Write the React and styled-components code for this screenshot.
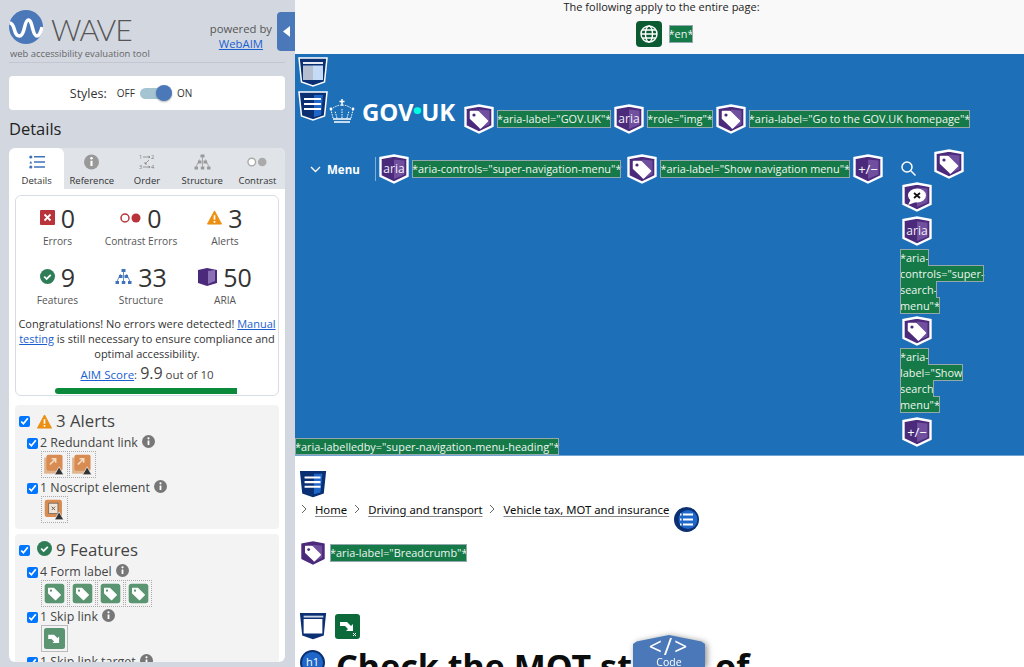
import React from 'react';
import styled, { createGlobalStyle } from 'styled-components';

const Global = createGlobalStyle`
  html, body { margin: 0; padding: 0; background: #fff; }
  body { font-family: "Open Sans", "Liberation Sans", sans-serif; overflow: hidden; }
  a { color: #1a5fd0; }
`;

const Page = styled.div`
  display: flex;
  width: 1024px;
  height: 667px;
  overflow: hidden;
  position: relative;
`;

/* ---------- sidebar ---------- */
const Sidebar = styled.aside`
  width: 295px;
  flex: none;
  height: 667px;
  background: #d3d8e0;
  padding: 0 10px 0 9px;
  box-sizing: border-box;
  position: relative;
  color: #333;
`;
const Brand = styled.div`
  display: flex;
  justify-content: space-between;
  height: 63px;
  border-bottom: 1px solid #c2c7cf;
  box-sizing: border-box;
`;
const LogoCol = styled.div`
  padding-top: 10px;
`;
const LogoRow = styled.div`
  display: flex;
  align-items: center;
  gap: 8px;
  height: 34px;
`;
const WaveWord = styled.span`
  font-family: "Lato", sans-serif;
  font-weight: 300;
  font-size: 30px;
  letter-spacing: -1px;
  color: #555;
  line-height: 34px;
  margin-top: 4px;
`;
const Tagline = styled.div`
  font-size: 9.4px;
  line-height: 14px;
  margin: 3px 0 0 1px;
  color: #666;
`;
const Powered = styled.div`
  font-size: 11.3px;
  line-height: 15px;
  text-align: center;
  padding: 21px 13px 0 0;
  color: #555;
`;
const Collapse = styled.button`
  position: absolute;
  left: 277px;
  top: 12px;
  width: 18px;
  height: 39px;
  padding: 0;
  border: 0;
  border-radius: 4px 0 0 4px;
  background: #4a78b8;
  display: flex;
  align-items: center;
  justify-content: center;
`;
const StylesBox = styled.div`
  margin-top: 13px;
  height: 34px;
  background: #fff;
  border-radius: 4px;
  display: flex;
  align-items: center;
  justify-content: center;
  font-size: 12px;
  padding-right: 32px;
`;
const StylesLabel = styled.span`
  margin-right: 10px;
  font-size: 12.5px;
`;
const Small = styled.span`
  font-size: 10px;
`;
const Switch = styled.span`
  position: relative;
  display: block;
  width: 32px;
  height: 11px;
  margin: 0 5px;
  border-radius: 6px;
  background: #a3c4d0;
  &::after {
    content: '';
    position: absolute;
    right: 0;
    top: -2.5px;
    width: 16px;
    height: 16px;
    border-radius: 50%;
    background: #4a78b8;
    box-shadow: 0 1px 2px rgba(0, 0, 0, .3);
  }
`;
const DetailsTitle = styled.h2`
  margin: 5px 0 0;
  padding-bottom: 5px;
  font-size: 16.5px;
  line-height: 28px;
  font-weight: 400;
  color: #222;
`;
const Panel = styled.div`
  height: 514px;
  background: #fff;
  border-radius: 6px;
  overflow: hidden;
`;
const Tabs = styled.div`
  display: flex;
  height: 41px;
  background: #e0e4e8;
`;
const Tab = styled.div`
  flex: 1;
  display: flex;
  flex-direction: column;
  align-items: center;
  justify-content: flex-start;
  padding-top: 5px;
  box-sizing: border-box;
  font-size: 9.5px;
  gap: 3px;
  color: #333;
  background: ${p => (p.$active ? '#fff' : 'transparent')};
  border-radius: ${p => (p.$active ? '6px 6px 0 0' : '0')};
  svg { height: 18px; }
`;
const PanelBody = styled.div`
  padding: 6px 6px 0;
`;
const Summary = styled.div`
  height: 201px;
  border: 1px solid #d8dde3;
  border-radius: 6px;
  box-sizing: border-box;
  padding-top: 5px;
  text-align: center;
`;
const StatGrid = styled.div`
  display: grid;
  grid-template-columns: 83px 84px 84px;
  justify-content: start;
  row-gap: 8px;
`;
const Stat = styled.div`
  display: flex;
  flex-direction: column;
  align-items: center;
  height: 51px;
`;
const StatTop = styled.div`
  display: flex;
  align-items: center;
  gap: 6px;
  height: 33px;
  font-size: 25px;
  color: #333;
`;
const StatLabel = styled.div`
  font-size: 10.2px;
  line-height: 14px;
  color: #555;
  white-space: nowrap;
`;
const Congrats = styled.p`
  margin: 5px 2px 0;
  font-size: 11px;
  line-height: 15px;
  color: #333;
`;
const Score = styled.div`
  margin-top: 1px;
  font-size: 11.5px;
  line-height: 22px;
  color: #444;
  b {
    font-weight: 400;
    font-size: 16px;
  }
`;
const ScoreBar = styled.div`
  width: 182px;
  height: 6px;
  margin: 2px 0 0 39px;
  border-radius: 3px 0 0 3px;
  background: #0a8a3a;
`;
const Group = styled.section`
  margin-top: ${p => p.$gap || 5}px;
  background: #f3f3f3;
  border-radius: 4px;
  padding: 4px 0 4px 4px;
`;
const GroupTitle = styled.div`
  display: flex;
  align-items: center;
  font-size: 16.8px;
  line-height: 24px;
  color: #444;
  gap: 4px;
  svg { margin-top: ${p => p.$lift || 0}px; }
`;
const Check = styled.input.attrs({ type: 'checkbox', defaultChecked: true })`
  width: 11px;
  height: 11px;
  margin: 0 ${p => p.$mr ?? 1}px 0 0;
  flex: none;
`;
const ItemRow = styled.div`
  display: flex;
  align-items: center;
  margin: 2px 0 0 8px;
  font-size: 12.4px;
  line-height: 16px;
  color: #444;
  gap: 1px;
  svg { margin-left: 3px; margin-top: -3px; }
`;
const Cells = styled.div`
  display: flex;
  margin: 0 0 2px 22px;
  min-height: 27px;
`;
const Cell = styled.div`
  width: 27px;
  height: 27px;
  box-sizing: border-box;
  display: flex;
  align-items: center;
  justify-content: center;
  border: 1px ${p => (p.$solid ? 'solid #bbb' : 'dotted #aaa')};
  margin-right: 1px;
`;

/* ---------- page ---------- */
const Main = styled.main`
  flex: 1;
  height: 667px;
  overflow: hidden;
  background: #fff;
  position: relative;
  font-size: 11px;
`;
const TopBand = styled.div`
  height: 54px;
  background: #f9f9f9;
  text-align: center;
  color: #222;
  line-height: 13px;
  padding-left: 4px;
  box-sizing: border-box;
`;
const BandIcons = styled.div`
  display: flex;
  justify-content: center;
  align-items: center;
  gap: 7px;
  margin-top: 8px;
  padding-left: 6px;
`;
const Attr = styled.span`
  background: #157a48;
  color: #eef6f0;
  outline: 1px solid #93a8ad;
  outline-offset: -1px;
  padding: 1px 0;
  font-size: 10.9px;
  line-height: 16px;
  white-space: nowrap;
  -webkit-box-decoration-break: clone;
  box-decoration-break: clone;
`;
const Masthead = styled.header`
  height: 402px;
  background: #1d70b8;
  border-bottom: 1px solid #6fa4d4;
  box-sizing: border-box;
  display: flex;
  flex-direction: column;
  padding-top: 2px;
`;
const MarkRow = styled.div`
  display: flex;
  height: 34px;
  padding-left: 2px;
`;
const LogoLine = styled.div`
  display: flex;
  align-items: center;
  height: 32px;
  padding-left: 2px;
  margin-bottom: 27px;
`;
const CrownSlot = styled.div`
  display: flex;
  margin: 9px 0 0 0;
`;
const GovWord = styled.span`
  font-family: "Open Sans", sans-serif;
  font-weight: 700;
  font-size: 24px;
  line-height: 32px;
  color: #fff;
  margin: 12px 9px 0 7px;
  letter-spacing: -.2px;
  white-space: nowrap;
  i {
    font-style: normal;
    font-size: 42px;
    line-height: 0;
    vertical-align: -4px;
    margin: 0 -2px;
    color: #00ffe0;
  }
`;
const TagPair = styled.div`
  display: flex;
  align-items: center;
  gap: 3px;
  margin-right: ${p => p.$after ?? 3}px;
  margin-top: ${p => p.$drop || 0}px;
`;
const NavLine = styled.div`
  display: flex;
  flex: 1;
  min-height: 0;
`;
const NavLeft = styled.div`
  width: 605px;
  flex: none;
  display: flex;
  align-items: center;
  align-self: flex-start;
  height: 30px;
  margin-top: 5px;
`;
const MenuBtn = styled.div`
  display: flex;
  align-items: center;
  gap: 6px;
  width: 81px;
  padding-left: 15px;
  box-sizing: border-box;
  color: #fff;
  font-weight: 700;
  font-size: 11.5px;
  height: 24px;
  border-right: 1px solid #7fb0dc;
  margin-right: 3px;
  flex: none;
`;
const SearchCol = styled.div`
  width: 85px;
  flex: none;
  line-height: 16px;
`;
const SearchTop = styled.div`
  display: flex;
  height: 30px;
  align-items: flex-end;
  gap: 16px;
  svg:first-child { margin-bottom: 1px; }
`;
const SearchMark = styled.div`
  display: flex;
  padding-left: 2px;
  margin: ${p => p.$my || '3px 0 0'};
`;
const BottomAttr = styled.div`
  line-height: 17px;
  height: 17px;
`;
const CrumbMark = styled.div`
  display: flex;
  padding: 13px 0 0 3px;
  height: 31px;
`;
const Crumbs = styled.nav`
  display: flex;
  align-items: center;
  height: 26px;
  padding-left: 6px;
  font-family: "Noto Sans", sans-serif;
  font-size: 11.3px;
  color: #0b0c0c;
  margin-top: -4px;
`;
const Crumb = styled.a`
  color: #0b0c0c;
  text-decoration: underline;
  text-decoration-color: #888;
  text-underline-offset: 2px;
  margin: 0 7px 0 8px;
`;
const CrumbEnd = styled.div`
  display: flex;
  margin: 20px 0 0 -2px;
`;
const LabelRow = styled.div`
  display: flex;
  align-items: center;
  gap: 4px;
  padding-left: 5px;
  height: 26px;
  margin-top: 18px;
`;
const MainMarks = styled.div`
  display: flex;
  gap: 7px;
  align-items: center;
  padding-left: 3px;
  margin-top: 45px;
  height: 30px;
`;
const H1Row = styled.div`
  display: flex;
  align-items: flex-start;
  margin-top: 4px;
  padding-left: 5px;
`;
const H1Badge = styled.span`
  flex: none;
  width: 25px;
  height: 25px;
  margin-top: 5px;
  border-radius: 50%;
  background: #1e66c8;
  border: 2px solid #0a2f73;
  box-sizing: border-box;
  color: #fff;
  font-size: 11px;
  line-height: 20px;
  text-align: center;
`;
const H1 = styled.h1`
  margin: -1px 0 0 11px;
  font-family: "Noto Sans", sans-serif;
  font-weight: 700;
  font-size: 34px;
  line-height: 44px;
  color: #0b0c0c;
  white-space: nowrap;
`;
const CodeShadow = styled.div`
  position: absolute;
  left: 338px;
  top: 635px;
  width: 72px;
  height: 32px;
  filter: drop-shadow(2px 1px 3px rgba(0, 0, 0, .45));
`;
const CodeTab = styled.div`
  height: 32px;
  background: #4a78b8;
  clip-path: polygon(0 28%, 5% 20%, 50% 0, 95% 20%, 100% 28%, 100% 100%, 0 100%);
  color: #fff;
  text-align: center;
  font-size: 10.5px;
  line-height: 11px;
  div { font-size: 23px; line-height: 21px; letter-spacing: 2px; padding-top: 1px; }
`;

/* ---------- drawn icons ---------- */
const TagGlyph = ({ fill = '#fff', hole = '#4b2a7b' }) => (
  <>
    <path d="M6.500 7.500h7.500l9.500 9.500-7 7L6.500 14.500z" fill={fill} stroke={fill} strokeWidth="1.500" strokeLinejoin="round" />
    <circle cx="10" cy="11" r="1.600" fill={hole} />
  </>
);

const Shield = ({ kind, size = 30, bare }) => (
  <svg width={size} height={size} viewBox="0 0 30 30" style={{ flex: 'none' }}>
    <path d="M1.500 4 15 1.500 28.500 4v18L15 28.500 1.500 22z" fill="#4b2a7b" stroke={bare ? 'none' : '#fff'} strokeWidth="2.400" />
    <path d="M15 5.500l10.500 1v14L15 25z" fill="#6f4f9e" />
    {kind === 'tag' && <TagGlyph />}
    {kind === 'aria' && (
      <text x="15" y="19" textAnchor="middle" fontSize="12" fill="#f2eef8" fontFamily="Open Sans">aria</text>
    )}
    {kind === 'plus' && (
      <text x="15" y="19.500" textAnchor="middle" fontSize="13" fill="#fff" fontFamily="Open Sans">+/−</text>
    )}
    {kind === 'x' && (
      <>
        <path d="M9 17 6 23l8-3z" fill="#fff" />
        <ellipse cx="15" cy="13.500" rx="9" ry="7" fill="#fff" />
        <path d="M12 11l6 5M18 11l-6 5" stroke="#111" strokeWidth="1.800" />
      </>
    )}
  </svg>
);

const Mark = ({ kind, border = true, size = 32 }) => (
  <svg width={size} height={size} viewBox="0 0 32 32" style={{ flex: 'none' }}>
    <path d="M2 2h28l-2.500 24L16 30 4.500 26z" fill="#0a2f73" stroke={border ? '#fff' : 'none'} strokeWidth="1.500" />
    {kind === 'banner' && (
      <>
        <path d="M6 6h20v2H6z" fill="#e6eaf0" />
        <path d="M6 9.500h10V24H6z" fill="#b6bfcf" />
        <path d="M16 9.500h10V24H16z" fill="#c5dbf5" />
      </>
    )}
    {kind === 'nav' && (
      <>
        <path d="M17 5h9l-2 20-7 2z" fill="#1e66c8" />
        <path d="M7 9h17M7 14h17M7 19h17" stroke="#fff" strokeWidth="2.200" />
      </>
    )}
    {kind === 'main' && (
      <>
        <path d="M6 5h21v2H6z" fill="#c9d4e6" />
        <path d="M6 8.500h20V24H6z" fill="#fff" />
      </>
    )}
  </svg>
);

const ListCircle = () => (
  <svg width="25" height="25" viewBox="0 0 25 25" style={{ flex: 'none' }}>
    <circle cx="12.500" cy="12.500" r="12.500" fill="#0a2f73" />
    <circle cx="14" cy="12.500" r="9.500" fill="#1e66c8" />
    <path d="M9 7.500h10M9 12.500h10M9 17.500h10" stroke="#fff" strokeWidth="1.800" />
    <path d="M6 7.500h1.500M6 12.500h1.500M6 17.500h1.500" stroke="#fff" strokeWidth="1.800" />
  </svg>
);

const Globe = () => (
  <svg width="26" height="26" viewBox="0 0 26 26">
    <rect width="26" height="26" rx="4" fill="#0c5a32" />
    <g fill="none" stroke="#fff" strokeWidth="1.400">
      <circle cx="13" cy="13" r="8" />
      <ellipse cx="13" cy="13" rx="3.500" ry="8" />
      <path d="M5 13h16M6.200 9h13.600M6.200 17h13.600" />
    </g>
  </svg>
);

const SkipSquare = () => (
  <svg width="25" height="25" viewBox="0 0 25 25" style={{ flex: 'none' }}>
    <rect width="25" height="25" rx="3" fill="#0c6a3a" />
    <path d="M5 8h7l4 4 2-2v7h-7l2-2-3-3H5z" fill="#fff" />
    <path d="M18 19l3 3M21 19l-3 3" stroke="#fff" />
  </svg>
);

const Crown = () => (
  <svg width="26" height="26" viewBox="0 0 26 26" style={{ flex: 'none' }}>
    <g fill="none" stroke="#fff">
      <path d="M13 1v7M10.500 3.500h5" strokeWidth="1.500" />
      <path d="M4 20 2 12M22 20l2-8M8 20 6 13M18 20l2-7M13 20v-9" strokeWidth="1" strokeDasharray="1.500 1" />
      <path d="M4 10q9-6 18 0" strokeWidth="1" strokeDasharray="1.500 1" />
      <path d="M4 21h18M5 24h16" strokeWidth="1.500" />
    </g>
    <circle cx="2" cy="11" r="1.400" fill="#fff" />
    <circle cx="24" cy="11" r="1.400" fill="#fff" />
  </svg>
);

const Search = () => (
  <svg width="18" height="18" viewBox="0 0 18 18" style={{ flex: 'none' }} fill="none" stroke="#fff" strokeWidth="1.500">
    <circle cx="7" cy="7" r="5" />
    <path d="M10.800 10.800 15.500 15.500" />
  </svg>
);

const WaveLogo = () => (
  <svg width="34" height="34" viewBox="0 0 34 34" style={{ flex: 'none' }}>
    <circle cx="17" cy="17" r="17" fill="#4a78b8" />
    <path d="M0.500 13c3 0 4 3 5 7s2.500 6 5 6 4-4 5-8.500 2-7.500 4-7.500 3 4 4 8 2.500 8 4.500 8 4-4 5-9" fill="none" stroke="#fff" strokeWidth="3.500" />
  </svg>
);

const ErrIcon = () => (
  <svg width="15" height="15" viewBox="0 0 15 15">
    <rect width="15" height="15" rx="1" fill="#b8343a" />
    <path d="M4.500 4.500l6 6M10.500 4.500l-6 6" stroke="#fff" strokeWidth="1.800" />
  </svg>
);
const ContrastIcon = ({ a = '#b8343a', b = '#b8343a', w = 21, h = 10 }) => (
  <svg width={w} height={h} viewBox="0 0 21 10">
    <circle cx="5" cy="5" r="4" fill="#fff" stroke={a} strokeWidth="1.500" />
    <circle cx="16" cy="5" r="4.500" fill={b} />
  </svg>
);
const AlertIcon = ({ size = 15 }) => (
  <svg width={size} height={size} viewBox="0 0 16 16" style={{ flex: 'none' }}>
    <path d="M8 1 15.500 15H.5z" fill="#ec8f12" stroke="#ec8f12" strokeLinejoin="round" />
    <path d="M8 5.500v5M8 11.800v1.700" stroke="#fff" strokeWidth="1.800" />
  </svg>
);
const OkIcon = ({ size = 15 }) => (
  <svg width={size} height={size} viewBox="0 0 15 15" style={{ flex: 'none' }}>
    <circle cx="7.500" cy="7.500" r="7.500" fill="#2f7d57" />
    <path d="M4.200 7.500 6.600 10l4.200-4.200" fill="none" stroke="#fff" strokeWidth="1.800" />
  </svg>
);
const TreeIcon = ({ color = '#3f72b8', size = 17 }) => (
  <svg width={size} height={size} viewBox="0 0 17 17">
    <g fill={color}>
      <rect x="6.500" y="1" width="4" height="3" />
      <rect x="4" y="7" width="3.500" height="3" />
      <rect x="9.500" y="7" width="3.500" height="3" />
      <rect x="0.500" y="13" width="3.500" height="3" />
      <rect x="6.800" y="13" width="3.500" height="3" />
      <rect x="13" y="13" width="3.500" height="3" />
    </g>
    <path d="M8.500 4v9M5.500 6 2.200 13M11.500 6l3.300 7" stroke={color} fill="none" strokeWidth=".8" />
  </svg>
);
const AriaIcon = () => (
  <svg width="19" height="18" viewBox="0 0 19 18">
    <path d="M0 2 9 0l10 2v13l-10 3-9-3z" fill="#4b2a7b" />
    <path d="M10 3l7-1v11l-7 3z" fill="#8a70b4" />
  </svg>
);
const Info = ({ size = 13, color = '#777' }) => (
  <svg width={size} height={size} viewBox="0 0 13 13" style={{ flex: 'none' }}>
    <circle cx="6.500" cy="6.500" r="6.500" fill={color} />
    <path d="M6.500 5.500v4.500" stroke="#fff" strokeWidth="1.800" />
    <circle cx="6.500" cy="3.300" r="1.100" fill="#fff" />
  </svg>
);
const ListTab = () => (
  <svg width="16" height="14" viewBox="0 0 16 14">
    <g fill="#3f72b8">
      <circle cx="1.800" cy="2" r="1.600" />
      <path d="M.3 8.500 1.800 6l1.500 2.500z" />
      <circle cx="1.800" cy="12" r="1.600" />
      <path d="M5 1h11v1.500H5zM5 6.200h11v1.500H5zM5 11.300h11v1.500H5z" />
    </g>
  </svg>
);
const OrderTab = () => (
  <svg width="16" height="16" viewBox="0 0 16 16" fill="#777" fontFamily="Open Sans" fontSize="5.500">
    <text x="0" y="5">1</text>
    <text x="12" y="5">2</text>
    <text x="0" y="15">3</text>
    <text x="12" y="15">4</text>
    <path d="M4 3h7M9.500 2l1.500 1-1.500 1M4 13h7M9.500 12l1.500 1-1.500 1M10 6 6 10M6 8v2h2" stroke="#777" strokeWidth=".7" fill="none" />
  </svg>
);

const AlertBadge = () => (
  <path d="M14 12l4 7h-8z" fill="#333" stroke="#fff" strokeWidth=".6" />
);
const RedundantCell = () => (
  <svg width="23" height="23" viewBox="0 0 20 20">
    <rect x="1" y="4" width="13" height="14" fill="#e0b48c" />
    <rect x="3" y="1.500" width="14" height="14" rx="1.500" fill="#d88c52" />
    <path d="M6 10l5-5M7.500 5H11v3.500" stroke="#f6dcc2" strokeWidth="1.400" fill="none" />
    <AlertBadge />
  </svg>
);
const NoscriptCell = () => (
  <svg width="23" height="23" viewBox="0 0 20 20">
    <rect x="1.500" y="1.500" width="15" height="15" rx="2" fill="#d88c52" />
    <rect x="5" y="4.500" width="8" height="9" fill="#f3e6d8" stroke="#555" strokeWidth=".6" />
    <path d="M7.500 7.500l3 3M10.500 7.500l-3 3" stroke="#555" strokeWidth=".8" />
    <AlertBadge />
  </svg>
);
const LabelCell = () => (
  <svg width="21" height="21" viewBox="0 0 30 30">
    <rect x="1" y="1" width="28" height="28" rx="4" fill="#5a9471" />
    <TagGlyph hole="#5a9471" />
  </svg>
);
const SkipCell = () => (
  <svg width="21" height="21" viewBox="0 0 25 25">
    <rect width="25" height="25" rx="3" fill="#5a9471" />
    <path d="M5 8h7l4 4 2-2v8h-8l2-2-3-3H5z" fill="#fff" />
  </svg>
);
const Chevron = () => (
  <svg width="6" height="10" viewBox="0 0 6 10" style={{ flex: 'none' }}>
    <path d="M1 1l4 4-4 4" fill="none" stroke="#666" />
  </svg>
);

const tabs = [
  { name: 'Details', icon: <ListTab />, active: true },
  { name: 'Reference', icon: <Info size={15} color="#999" /> },
  { name: 'Order', icon: <OrderTab /> },
  { name: 'Structure', icon: <TreeIcon color="#999" /> },
  { name: 'Contrast', icon: <ContrastIcon a="#aaa" b="#aaa" w={20} h={10} /> },
];

const stats = [
  { n: 0, label: 'Errors', icon: <ErrIcon /> },
  { n: 0, label: 'Contrast Errors', icon: <ContrastIcon /> },
  { n: 3, label: 'Alerts', icon: <AlertIcon /> },
  { n: 9, label: 'Features', icon: <OkIcon /> },
  { n: 33, label: 'Structure', icon: <TreeIcon /> },
  { n: 50, label: 'ARIA', icon: <AriaIcon /> },
];

export default function App() {
  return (
    <Page>
      <Global />
      <Sidebar>
        <Brand>
          <LogoCol>
            <LogoRow>
              <WaveLogo />
              <WaveWord>WAVE</WaveWord>
            </LogoRow>
            <Tagline>web accessibility evaluation tool</Tagline>
          </LogoCol>
          <Powered>
            powered by
            <br />
            <a href="#webaim">WebAIM</a>
          </Powered>
        </Brand>
        <Collapse aria-label="Hide">
          <svg width="7" height="11" viewBox="0 0 7 11"><path d="M7 0v11L0 5.500z" fill="#fff" /></svg>
        </Collapse>
        <StylesBox>
          <StylesLabel>Styles:</StylesLabel>
          <Small>OFF</Small>
          <Switch />
          <Small>ON</Small>
        </StylesBox>
        <DetailsTitle>Details</DetailsTitle>
        <Panel>
          <Tabs>
            {tabs.map(t => (
              <Tab key={t.name} $active={t.active}>
                {t.icon}
                <span>{t.name}</span>
              </Tab>
            ))}
          </Tabs>
          <PanelBody>
            <Summary>
              <StatGrid>
                {stats.map(s => (
                  <Stat key={s.label}>
                    <StatTop>
                      {s.icon}
                      {s.n}
                    </StatTop>
                    <StatLabel>{s.label}</StatLabel>
                  </Stat>
                ))}
              </StatGrid>
              <Congrats>
                Congratulations! No errors were detected! <a href="#manual">Manual testing</a> is still necessary to ensure compliance and optimal accessibility.
              </Congrats>
              <Score>
                <a href="#aim">AIM Score</a>: <b>9.9</b> out of 10
              </Score>
              <ScoreBar />
            </Summary>
            <Group $gap={9}>
              <GroupTitle>
                <Check $mr={3} />
                <AlertIcon size={15} />
                3 Alerts
              </GroupTitle>
              <ItemRow>
                <Check />2 Redundant link <Info />
              </ItemRow>
              <Cells>
                <Cell><RedundantCell /></Cell>
                <Cell><RedundantCell /></Cell>
              </Cells>
              <ItemRow>
                <Check />1 Noscript element <Info />
              </ItemRow>
              <Cells>
                <Cell><NoscriptCell /></Cell>
              </Cells>
            </Group>
            <Group>
              <GroupTitle $lift={-3}>
                <Check $mr={3} />
                <OkIcon size={15} />
                9 Features
              </GroupTitle>
              <ItemRow>
                <Check />4 Form label <Info />
              </ItemRow>
              <Cells>
                <Cell><LabelCell /></Cell>
                <Cell><LabelCell /></Cell>
                <Cell><LabelCell /></Cell>
                <Cell><LabelCell /></Cell>
              </Cells>
              <ItemRow>
                <Check />1 Skip link <Info />
              </ItemRow>
              <Cells>
                <Cell $solid><SkipCell /></Cell>
              </Cells>
              <ItemRow>
                <Check />1 Skip link target <Info />
              </ItemRow>
            </Group>
          </PanelBody>
        </Panel>
      </Sidebar>

      <Main>
        <TopBand>
          The following apply to the entire page:
          <BandIcons>
            <Globe />
            <Attr>*en*</Attr>
          </BandIcons>
        </TopBand>
        <Masthead>
          <MarkRow><Mark kind="banner" /></MarkRow>
          <LogoLine>
            <Mark kind="nav" />
            <CrownSlot><Crown /></CrownSlot>
            <GovWord>GOV<i>·</i>UK</GovWord>
            <TagPair $drop={26}><Shield kind="tag" /><Attr>*aria-label="GOV.UK"*</Attr></TagPair>
            <TagPair $drop={26}><Shield kind="aria" /><Attr>*role="img"*</Attr></TagPair>
            <TagPair $drop={26}><Shield kind="tag" /><Attr>*aria-label="Go to the GOV.UK homepage"*</Attr></TagPair>
          </LogoLine>
          <NavLine>
            <NavLeft>
              <MenuBtn>
                <svg width="11" height="7" viewBox="0 0 11 7"><path d="M1 1l4.500 4.500L10 1" fill="none" stroke="#fff" strokeWidth="1.300" /></svg>
                Menu
              </MenuBtn>
              <TagPair $after={6}><Shield kind="aria" /><Attr>*aria-controls="super-navigation-menu"*</Attr></TagPair>
              <TagPair><Shield kind="tag" /><Attr>*aria-label="Show navigation menu"*</Attr></TagPair>
              <Shield kind="plus" />
            </NavLeft>
            <SearchCol>
              <SearchTop>
                <Search />
                <Shield kind="tag" />
              </SearchTop>
              <SearchMark><Shield kind="x" /></SearchMark>
              <SearchMark $my="4px 0"><Shield kind="aria" /></SearchMark>
              <Attr>*aria-<br />controls="super-<br />search-<br />menu"*</Attr>
              <SearchMark $my="2px 0 3px"><Shield kind="tag" /></SearchMark>
              <Attr>*aria-<br />label="Show<br />search<br />menu"*</Attr>
              <SearchMark $my="4px 0 0"><Shield kind="plus" /></SearchMark>
            </SearchCol>
          </NavLine>
          <BottomAttr><Attr>*aria-labelledby="super-navigation-menu-heading"*</Attr></BottomAttr>
        </Masthead>
        <CrumbMark><Mark kind="nav" border={false} size={30} /></CrumbMark>
        <Crumbs>
          <Chevron />
          <Crumb>Home</Crumb>
          <Chevron />
          <Crumb>Driving and transport</Crumb>
          <Chevron />
          <Crumb>Vehicle tax, MOT and insurance</Crumb>
          <CrumbEnd><ListCircle /></CrumbEnd>
        </Crumbs>
        <LabelRow>
          <Shield kind="tag" size={26} bare />
          <Attr>*aria-label="Breadcrumb"*</Attr>
        </LabelRow>
        <MainMarks>
          <Mark kind="main" border={false} size={30} />
          <SkipSquare />
        </MainMarks>
        <H1Row>
          <H1Badge>h1</H1Badge>
          <H1>Check the MOT status of</H1>
        </H1Row>
        <CodeShadow>
          <CodeTab>
            <div>&lt;/&gt;</div>
            Code
          </CodeTab>
        </CodeShadow>
      </Main>
    </Page>
  );
}
